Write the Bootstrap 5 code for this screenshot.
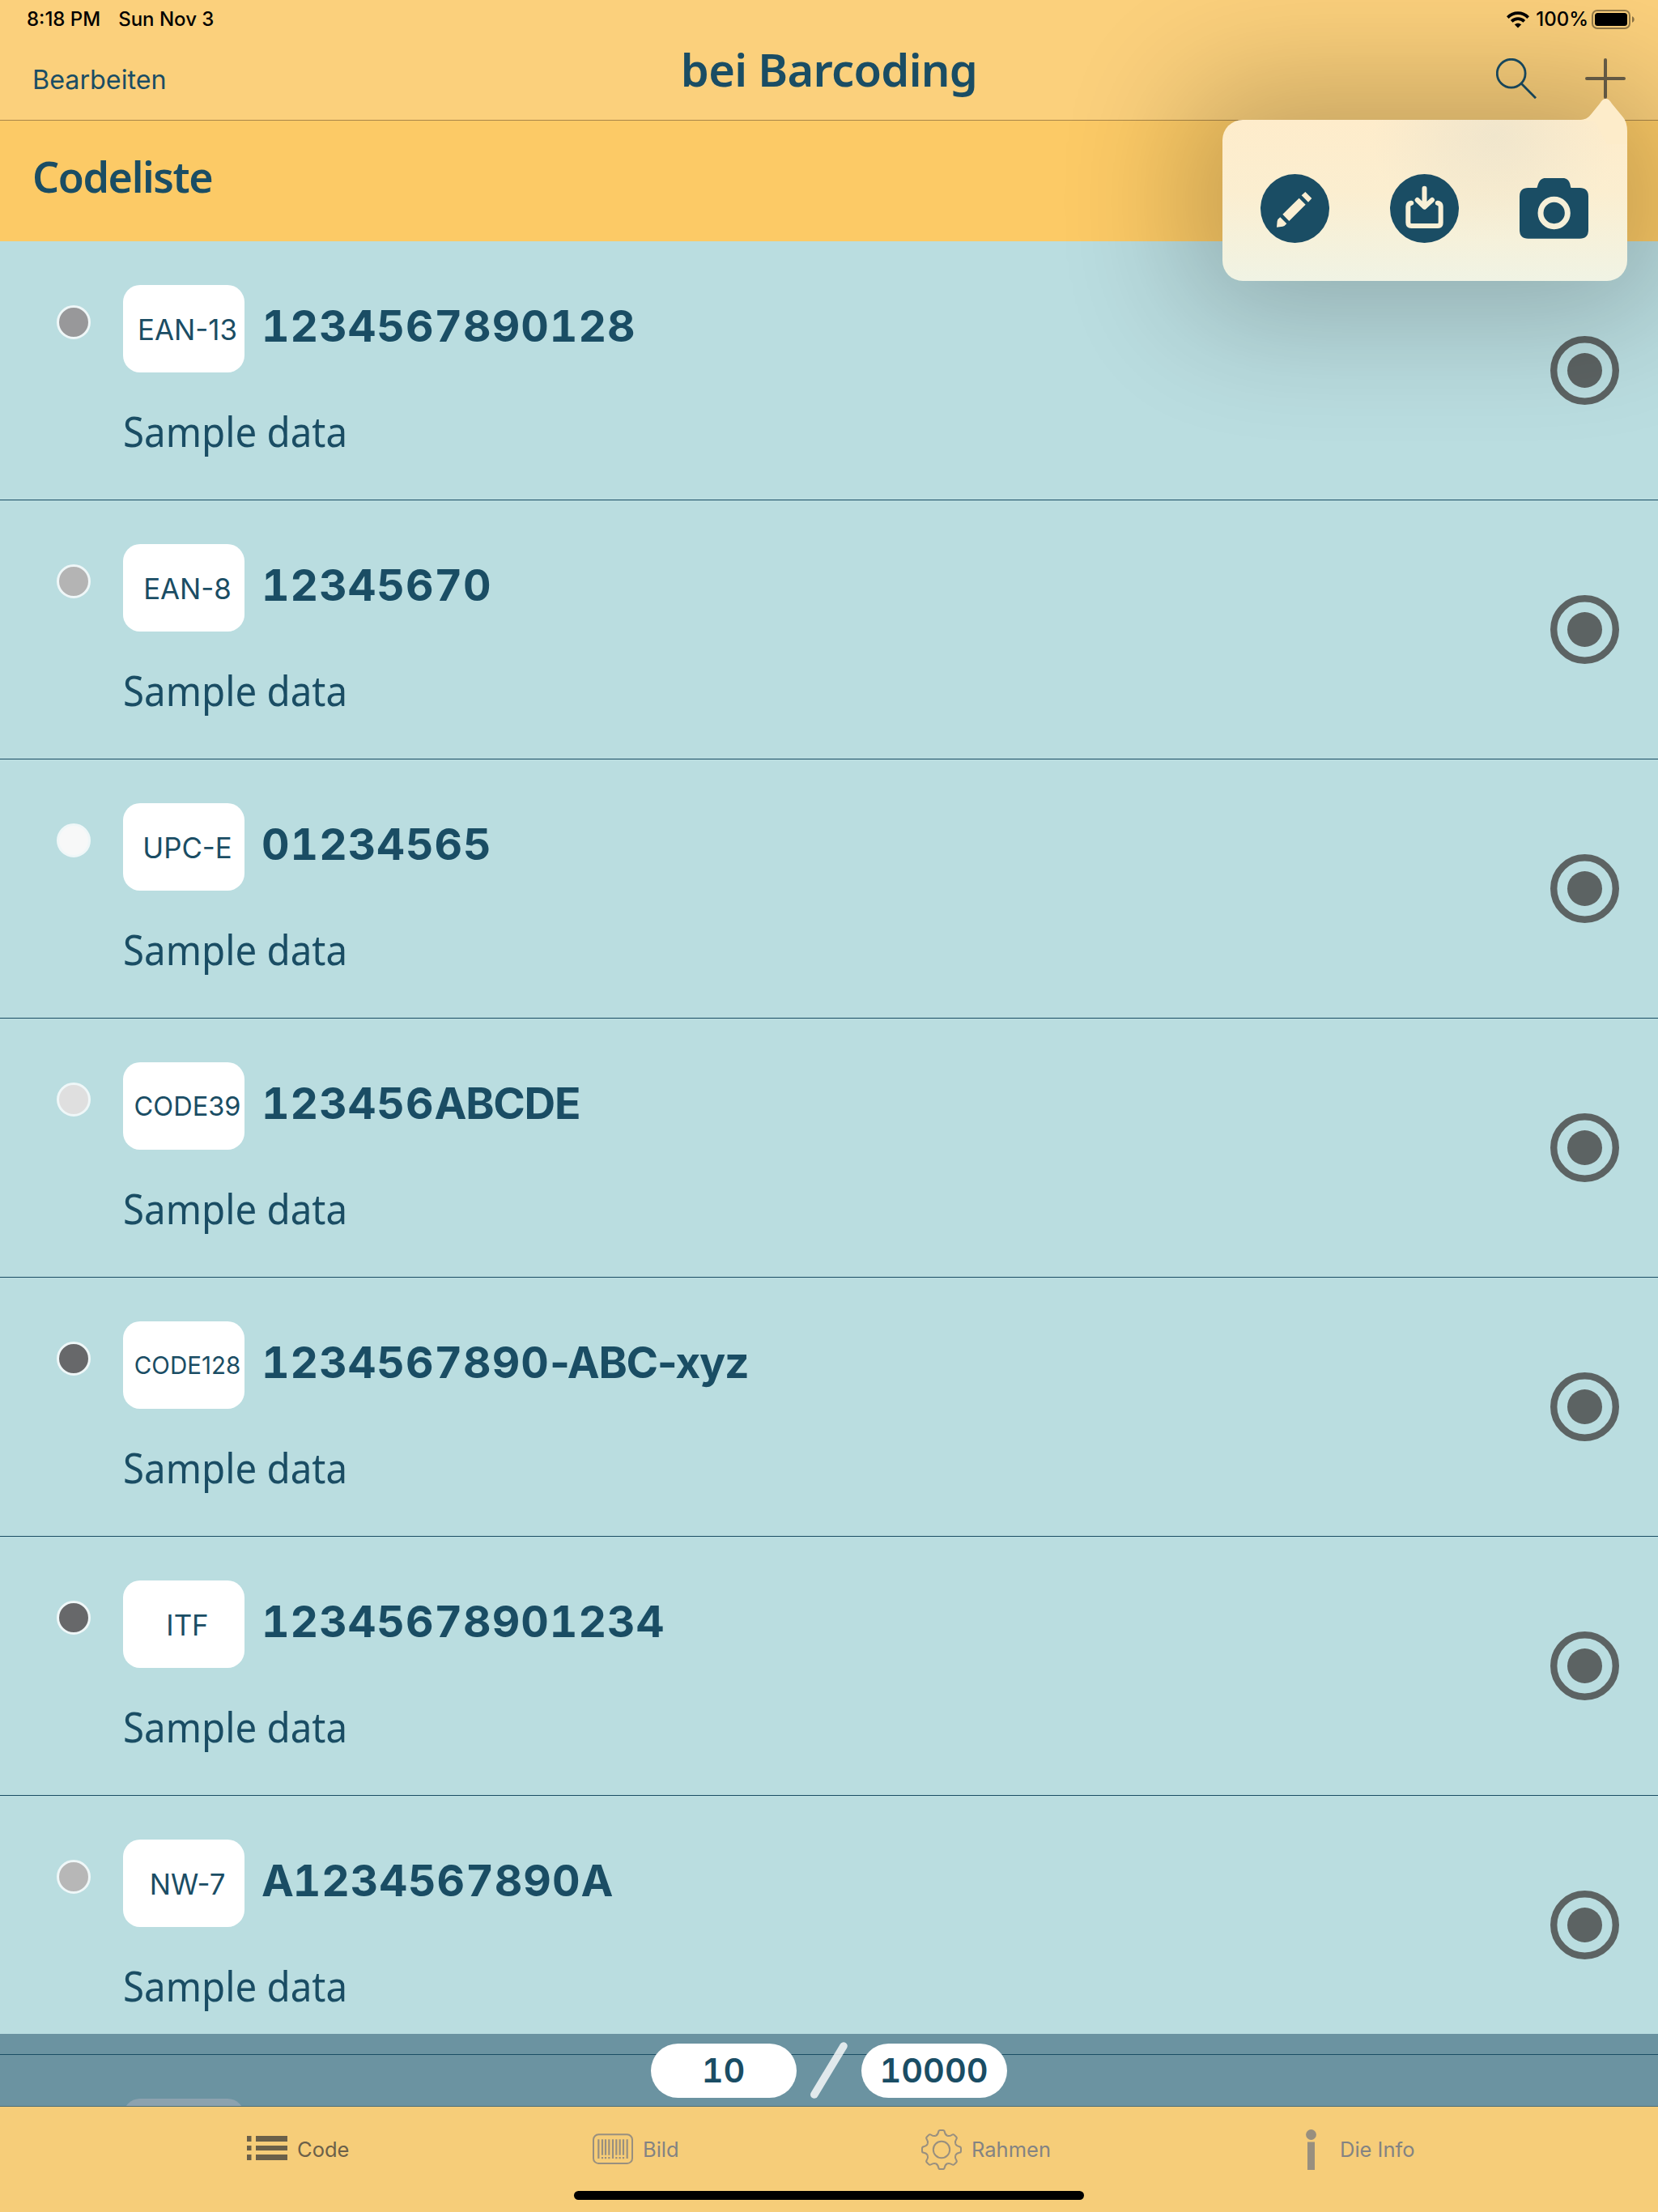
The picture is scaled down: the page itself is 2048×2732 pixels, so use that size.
<!DOCTYPE html>
<html lang="de">
<head>
<meta charset="utf-8">
<title>bei Barcoding</title>
<link rel="stylesheet" href="https://cdn.jsdelivr.net/npm/bootstrap@5.3.0/dist/css/bootstrap.min.css">
<style>
:root{--ink:#1a4d64;--sky:#badde0;--ui:Inter,"Liberation Sans",sans-serif;--hum:"Noto Sans","Open Sans",sans-serif}
body{width:2048px;height:2732px;overflow:hidden;background:var(--sky);color:var(--ink);font-family:var(--ui)}
svg{display:block;flex:none}
.t{white-space:nowrap;line-height:1}
.screen{height:2732px;overflow:hidden}
.topbar{height:149px;background:#fbd07c;border-bottom:1px solid #a98648}
.status{height:47px;padding:1px 29px 0 33px;color:#000;font-size:24px;font-weight:500}
.status .day{margin-left:22px}
.side{flex:1 1 0}
.titlebar{height:101px;padding:0 40px}
.edit{font-size:32.3px;padding-top:3px}
.title{font-family:var(--hum);font-weight:600;font-size:56px;letter-spacing:-.7px;padding-bottom:26px}
.tools{gap:60px;padding-bottom:1px}
.charge{margin:0 4px 0 8px}
.section{height:149px;background:#fcca66;padding:0 40px 11px}
.section .t{font-family:var(--hum);font-weight:600;font-size:52px;letter-spacing:-1.4px}
.entries{height:2214px;overflow:hidden}
.entry{height:320px;border-bottom:1px solid var(--ink);padding:54px 48px 0 70px}
.dot{width:42px;height:42px;border-radius:50%;border:3px solid #eff7f8;margin:25px 40px 0 0}
.kind{width:150px;height:108px;border-radius:21px;background:#fff;font-size:34.8px;padding:2px 0 0 9px}
.kind-md{font-size:32.5px}
.kind-sm{font-size:29.5px}
.code{height:101px;font-weight:700;font-size:53.5px;margin-left:21px;letter-spacing:-1.3px}
.digits{font-variant-numeric:tabular-nums;letter-spacing:1px}
.note{font-family:var(--hum);font-size:51px;margin-top:47px;transform:scaleX(.93);transform-origin:0 0}
.pick{margin-top:63px}
.counter{height:89px;background:linear-gradient(#6b93a1 25px,#1b4e65 25px,#1b4e65 26px,#6b93a1 26px);gap:17px;padding-top:1px;overflow:hidden}
.peek{left:152px;top:80px;width:150px;height:108px;border-radius:21px;background:#8ca2af}
.pill{width:180px;height:67px;border-radius:33.5px;background:#fff;font-size:41.5px;font-weight:600;font-variant-numeric:tabular-nums;padding:2px 1px 0 0}
.tabs{height:131px;background:#f6cd79;border-top:1px solid #4b6d78;font-size:25.5px;color:#838383;padding:0 0 24px 305px}
.tab{gap:12px}
.tab.on{color:#6b6049}
.tab-last{gap:10px}
.home{left:709px;top:2706px;width:630px;height:11px;border-radius:6px;background:#000}
.popshade{left:1466px;top:106px;width:588px;height:285px;border-radius:50px;background:#000;opacity:.22;filter:blur(80px);z-index:4}
.pop{left:1510px;top:148px;width:500px;height:199px;border-radius:25px;padding:19px 48px 0 47px;z-index:5;
background:radial-gradient(ellipse 150px 130px at 335px 20px,rgba(225,222,205,.45),rgba(225,222,205,0)),linear-gradient(#feeccb 0,#fbeed0 45%,#f5f1db 75%,#f0f3e4 100%)}
.beak{left:430px;top:-30px}
</style>
<script src="https://cdn.jsdelivr.net/npm/bootstrap@5.3.0/dist/js/bootstrap.bundle.min.js"></script>
</head>
<body>
<div class="screen position-relative d-flex flex-column">
<header class="topbar">
<div class="status d-flex align-items-center">
<span class="t">8:18 PM</span><span class="t day">Sun Nov 3</span>
<svg class="ms-auto" width="28" height="21" viewBox="0 0 28 21"><g fill="none" stroke="#000" stroke-width="3.8"><path d="M1.3 7.6C8.5.3 19.500.3 26.700 7.600"/><path d="M6.200 12.300c4.400-4.300 11.200-4.300 15.600 0"/></g><path d="M14 20.500 9.800 16.300c2.400-2.200 6-2.200 8.400 0z"/></svg>
<span class="t charge">100%</span>
<svg width="53" height="24" viewBox="0 0 53 24"><rect x="1" y="1" width="46" height="22" rx="6" fill="none" stroke="#000" stroke-opacity=".42" stroke-width="2"/><rect x="4" y="4" width="40" height="16" rx="3.500"/><path d="M50 8.200c3.600 1.200 3.600 6.400 0 7.600z" fill-opacity=".45"/></svg>
</div>
<div class="titlebar d-flex align-items-center">
<span class="t edit side">Bearbeiten</span>
<h1 class="t title mb-0">bei Barcoding</h1>
<span class="side tools d-flex justify-content-end">
<svg width="50" height="50" viewBox="0 0 50 50" fill="none" stroke="#1a4d64" stroke-width="2.800"><circle cx="18.700" cy="18.700" r="17.400"/><path d="M31 31 49 49.200"/></svg>
<svg width="50" height="50" viewBox="0 0 50 50" fill="none" stroke="#6b6049" stroke-width="4" stroke-linecap="round"><path d="M25 2v46M2 25h46"/></svg>
</span>
</div>
</header>
<div class="section d-flex align-items-center"><span class="t">Codeliste</span></div>
<main class="entries" id="entries"></main>
<div class="counter position-relative d-flex align-items-center justify-content-center">
<span class="peek position-absolute"></span>
<span class="pill t d-flex align-items-center justify-content-center">10</span>
<svg width="46" height="74" viewBox="0 0 46 74"><path d="M41 7 4.800 67" stroke="#fff" stroke-opacity=".8" stroke-width="9.500" stroke-linecap="round"/></svg>
<span class="pill t d-flex align-items-center justify-content-center">10000</span>
</div>
<nav class="tabs d-flex align-items-center">
<span class="tab on t d-flex align-items-center" style="width:427px"><svg width="50" height="50" viewBox="0 0 50 50" fill="currentColor"><path d="M0 8h5.500v7H0zm11 0h39v7H11zM0 20h5.500v6H0zm11 0h39v6H11zM0 31h5.500v7H0zm11 0h39v7H11z"/></svg>Code</span>
<span class="tab t d-flex align-items-center" style="width:406px"><svg width="50" height="50" viewBox="0 0 150 150" fill="none" stroke="#988f7f"><rect x="3" y="19" width="144" height="107" rx="19" stroke-width="6"/><path d="M22 37v71M75 37v71M128 37v71M36 37v58M48 37v58M61 37v58M88 37v58M101 37v58M114 37v58M36 102v7M48 102v7M61 102v7M88 102v7M101 102v7M114 102v7" stroke-width="6.500"/></svg>Bild</span>
<span class="tab t d-flex align-items-center" style="width:457px"><svg width="50" height="50" viewBox="-75 -75 150 150" fill="none" stroke="#988f7f" stroke-width="6"><circle r="30.500"/><g id="q"><path id="k" d="M-21.400-51.700C-14-55-13-58-11.500-66Q-10.500-72-5-72H5Q10.500-72 11.500-66C13-58 14-55 21.400-51.700"/><use href="#k" transform="rotate(45)"/></g><use href="#q" transform="rotate(90)"/><use href="#q" transform="rotate(180)"/><use href="#q" transform="rotate(270)"/></svg>Rahmen</span>
<span class="tab tab-last t d-flex align-items-center"><svg width="50" height="50" viewBox="0 0 50 50" fill="#988f7f"><circle cx="24.500" cy="6.500" r="6.400"/><path d="M20 15.500h9V50h-9z"/></svg>Die Info</span>
</nav>
<div class="home position-absolute"></div>
<div class="popshade position-absolute"></div>
<div class="pop position-absolute d-flex align-items-center justify-content-between">
<svg class="beak position-absolute" width="70" height="60" viewBox="430 -30 70 60"><path d="M430 .5C448 .5 450-1 455-6.500L466-20Q473.500-32.500 481-20L495-3Q500 3 500 14V30H475L460 2z" fill="#fdecca"/></svg>
<svg width="85" height="85" viewBox="0 0 255 255"><circle cx="127.500" cy="127.500" r="127.500" fill="#1a4d64"/><path d="M166 66 190 90 177 104 152 79zM143 89 167 113 106 174 82 149zM73 160 97 184Q90 193 82 194L60 197 62 175Q64 166 73 160z" fill="#fbefd3"/></svg>
<svg width="85" height="85" viewBox="0 0 255 255"><circle cx="127.500" cy="127.500" r="127.500" fill="#1a4d64"/><g fill="none" stroke="#f8f0d6" stroke-linecap="round" stroke-linejoin="round"><path d="M79 107Q67 109 67 120V180Q67 192 79 192H176Q188 192 188 180V120Q188 109 176 107" stroke-width="18"/><path d="M127.500 54V112M101 96 127.500 121 156 96" stroke="#1a4d64" stroke-width="36" stroke-linecap="butt"/><path d="M127.500 53V115M101 96 127.500 122 156 96" stroke-width="18"/></g><path d="M110 108H145L127.500 130z" fill="#f8f0d6"/></svg>
<svg width="85" height="75" viewBox="0 0 255 225"><path d="M32 36H64C69 32 68 0 96 0H160C190 0 187 32 191 36H223Q255 36 255 68V192Q255 224 223 224H32Q0 224 0 192V68Q0 36 32 36z" fill="#1a4d64"/><circle cx="128" cy="129" r="50" fill="none" stroke="#f5efd8" stroke-width="21"/></svg>
</div>
</div>
<script>
const rows = [
 ['EAN-13', '1234567890128', '#98989a', ''],
 ['EAN-8', '12345670', '#b4b4b4', ''],
 ['UPC-E', '01234565', '#f7f8f8', ''],
 ['CODE39', '123456ABCDE', '#dfdfdf', 'kind-md'],
 ['CODE128', '1234567890-ABC-xyz', '#67686a', 'kind-sm'],
 ['ITF', '12345678901234', '#67686a', ''],
 ['NW-7', 'A1234567890A', '#b7b7b7', '']
];
const withDigits = code => code.replace(/\d+/g, '<span class="digits">$&</span>');
document.getElementById('entries').innerHTML = rows.map(([kind, code, dot, size]) => `
<div class="entry d-flex">
<span class="dot" style="background:${dot}"></span>
<div>
<div class="d-flex"><span class="kind ${size} t d-flex align-items-center justify-content-center">${kind}</span><span class="code t d-flex align-items-center">${withDigits(code)}</span></div>
<div class="t note">Sample data</div>
</div>
<svg class="pick ms-auto" width="85" height="85" viewBox="0 0 85 85"><circle cx="42.500" cy="42.500" r="38.300" fill="none" stroke="#5c6363" stroke-width="8.400"/><circle cx="42.500" cy="42.500" r="21.500" fill="#5c6363"/></svg>
</div>`).join('');
</script>
</body>
</html>
